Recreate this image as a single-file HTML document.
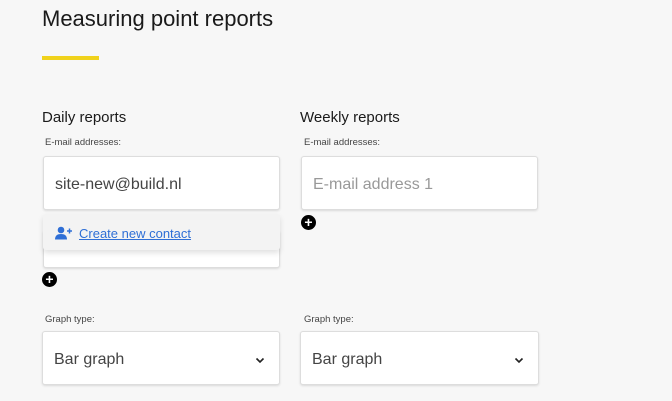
<!DOCTYPE html>
<html><head><style>
*{box-sizing:border-box;margin:0;padding:0}
body{width:672px;height:401px;background:#f7f7f7;font-family:"Liberation Sans",sans-serif;color:#222;position:relative;overflow:hidden}
.a{position:absolute}
h1{position:absolute;left:42px;top:6px;font-size:22px;font-weight:normal;color:#1a1a1a}
h2{position:absolute;font-size:15px;font-weight:normal;color:#1a1a1a}
.lbl{position:absolute;font-size:9.5px;color:#444}
.box{position:absolute;background:#fff;border:1px solid #ddd;border-radius:3px;box-shadow:0 1px 2px rgba(0,0,0,.12);font-size:16px;color:#444;padding-left:11px;padding-top:4px;display:flex;align-items:center}
.plus{position:absolute;width:15px;height:15px;border-radius:50%;background:#000;color:#fff;font-size:14px;font-weight:bold;line-height:15px;text-align:center}
.chev{position:absolute;right:14px;top:24px}
</style></head><body>
<h1>Measuring point reports</h1>
<div class="a" style="left:42px;top:56px;width:57px;height:4px;background:#f0d21c"></div>
<h2 style="left:42px;top:109px">Daily reports</h2>
<h2 style="left:300px;top:109px">Weekly reports</h2>
<div class="lbl" style="left:45px;top:137px">E-mail addresses:</div>
<div class="lbl" style="left:304px;top:137px">E-mail addresses:</div>
<div class="box" style="left:43px;top:230px;width:237px;height:38px"></div>
<div class="box" style="left:43px;top:156px;width:237px;height:54px">site-new@build.nl</div>
<div class="a" style="left:43px;top:214px;width:237px;height:36px;background:#f3f3f3;border-radius:3px;box-shadow:0 3px 6px rgba(0,0,0,.12);display:flex;align-items:center;padding-left:12px;padding-top:2px">
<svg width="18" height="14" viewBox="0 0 18 14"><circle cx="6" cy="4" r="3.3" fill="#2f6fd6"/><path d="M0 13.5c0-4 2.5-5.5 6-5.5s6 1.5 6 5.5z" fill="#2f6fd6"/><path d="M14.5 2.5v5M12 5h5" stroke="#2f6fd6" stroke-width="1.5"/></svg>
<span style="margin-left:6px;font-size:13px;color:#2f6fd6;text-decoration:underline">Create new contact</span></div>
<div class="plus" style="left:42px;top:272px">+</div>
<div class="box" style="left:301px;top:156px;width:237px;height:54px;color:#999">E-mail address 1</div>
<div class="plus" style="left:301px;top:215px">+</div>
<div class="lbl" style="left:45px;top:314px">Graph type:</div>
<div class="lbl" style="left:304px;top:314px">Graph type:</div>
<div class="box" style="left:42px;top:331px;width:238px;height:54px">Bar graph<svg class="chev" width="10" height="8" viewBox="0 0 10 8"><path d="M1.5 2.5l3.5 3.5 3.5-3.5" stroke="#222" stroke-width="1.6" fill="none"/></svg></div>
<div class="box" style="left:300px;top:331px;width:239px;height:54px">Bar graph<svg class="chev" width="10" height="8" viewBox="0 0 10 8"><path d="M1.5 2.5l3.5 3.5 3.5-3.5" stroke="#222" stroke-width="1.6" fill="none"/></svg></div>
</body></html>
